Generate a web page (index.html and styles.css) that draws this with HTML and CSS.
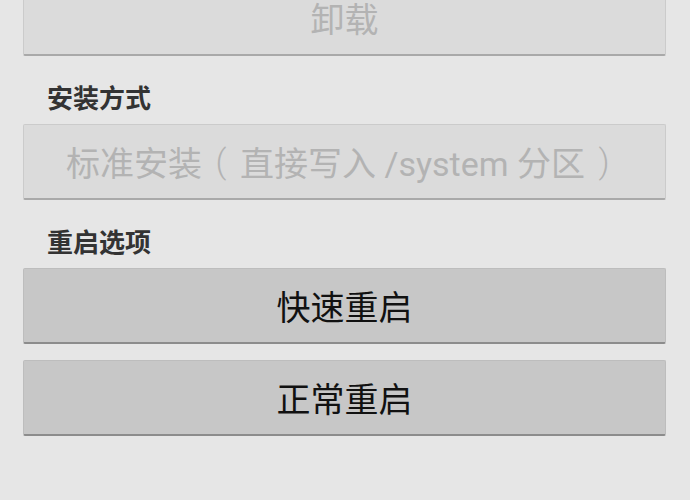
FILE: index.html
```html
<!DOCTYPE html>
<html lang="zh-CN">
<head>
<meta charset="utf-8">
<title>安装选项</title>
<link rel="stylesheet" href="styles.css">
</head>
<body>
<main class="panel">
  <button class="btn btn-disabled btn-first" disabled>卸载</button>
  <h3 class="section-label">安装方式</h3>
  <button class="btn btn-disabled" disabled>标准安装<span class="paren">(</span>直接写入 /system 分区<span class="paren">)</span></button>
  <h3 class="section-label">重启选项</h3>
  <div class="btn-stack">
    <button class="btn">快速重启</button>
    <button class="btn">正常重启</button>
  </div>
</main>
</body>
</html>
```

FILE: styles.css
```css
html, body {
  margin: 0;
  padding: 0;
  background: #e6e6e6;
  font-family: Roboto, "Noto Sans CJK SC", sans-serif;
}

.panel {
  display: flex;
  flex-direction: column;
  padding: 0 24px 0 23px;
}

.btn {
  display: flex;
  align-items: center;
  justify-content: center;
  box-sizing: border-box;
  width: 100%;
  height: 76px;
  margin: 0;
  padding: 0 0 1px;
  font-family: Roboto, "Noto Sans CJK SC", sans-serif;
  font-size: 34px;
  color: #111111;
  background: #c7c7c7;
  border: 1px solid #bdbdbd;
  border-bottom: 2px solid #8c8c8c;
  border-radius: 2px;
  white-space: pre;
}

.btn-disabled {
  color: #b3b3b3;
  background: #dbdbdb;
  border-color: #cbcbcb;
  border-bottom-color: #a9a9a9;
}

.paren {
  display: inline-block;
  width: 38px;
  text-align: center;
  font-weight: 300;
}

.btn-first {
  margin-top: -20px;
}

.section-label {
  margin: 30px 0 12px 24px;
  font-size: 26px;
  line-height: 26px;
  font-weight: bold;
  color: #333333;
}

.btn-stack {
  display: flex;
  flex-direction: column;
  gap: 16px;
}
```
